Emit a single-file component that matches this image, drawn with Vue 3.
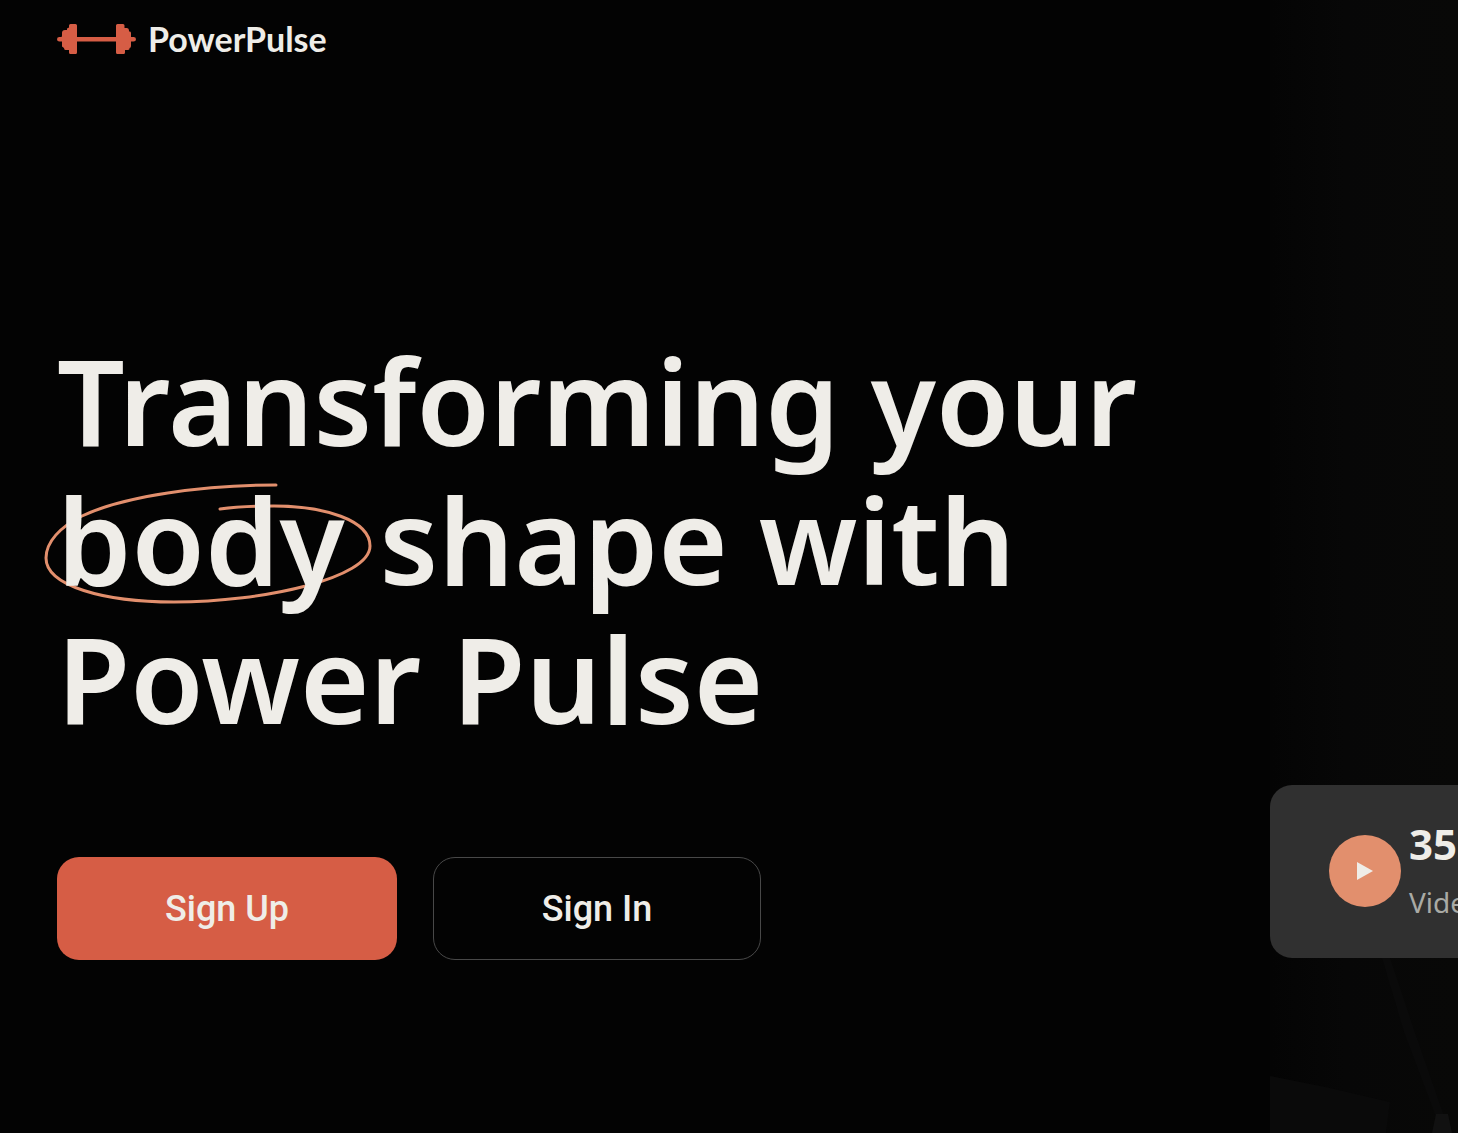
<script setup>
const headline = { first: 'Transforming your', circled: 'body', second: 'shape with', third: 'Power Pulse' }
const video = { count: '35', label: 'Vide' }
</script>

<template>
  <div class="page">
    <div class="content">
      <header class="header">
        <a class="brand" href="#">
          <svg class="dumbbell" viewBox="0 0 79 30" aria-hidden="true">
            <path d="M0 15.2Q0 13 2.4 13H4.5Q5 12.300 5 11V9Q5 6 8 6H10V4.500L12 3.500V1.500Q12 0 13.500 0H18.500Q20 0 20 1.500V13H59V1.500Q59 0 60.500 0H66Q67.500 0 67.500 1.500V4H70Q72 4 72 6.500V7.500H73Q74 7.500 74 9.500V13H76.500Q79 13 79 15.200T76.500 17.500H74V22Q74 24 72.500 24V25Q72.500 26 70.500 26H68V28.500Q68 30 66.500 30H60.500Q59 30 59 28.500V17.500H20V28.500Q20 30 18.500 30H13.500Q12 30 12 28.500V26H8.500Q7 26 7 24L5 22.500V17.500H2.400Q0 17.500 0 15.200Z" />
          </svg>
          <span>PowerPulse</span>
        </a>
      </header>

      <main class="hero">
        <h1 class="title">
          {{ headline.first }}<br />
          <span class="circled">
            <svg class="ring" viewBox="0 0 328 122" aria-hidden="true">
              <path d="M232 3C160 3 80 14 38 34C16 45 2 60 2 76C2 104 60 120 130 120C220 120 326 96 326 64C326 38 280 24 230 24C210 24 190 25 176 27" />
            </svg>
            <span class="word">{{ headline.circled }}</span>
          </span>
          {{ headline.second }}<br />
          {{ headline.third }}
        </h1>
        <div class="actions">
          <button class="button primary" type="button">Sign Up</button>
          <button class="button outline" type="button">Sign In</button>
        </div>
      </main>
    </div>

    <aside class="visual">
      <svg class="backdrop" viewBox="0 0 188 175" aria-hidden="true">
        <path d="M0 118L60 130L120 144L116 175H0Z" fill="#0a0a0a" />
        <path d="M112 0L120 0L140 60L180 175H172L134 74Z" fill="#0a0a0a" />
        <path d="M166 156L178 156L182 175H162Z" fill="#111" />
      </svg>
      <section class="card">
        <span class="play">
          <svg viewBox="0 0 16 18" aria-hidden="true"><path d="M0 0L16 9L0 18Z" /></svg>
        </span>
        <div class="stats">
          <strong class="count">{{ video.count }}</strong>
          <span class="label">{{ video.label }}</span>
        </div>
      </section>
    </aside>
  </div>
</template>

<style>
body {
  margin: 0;
  background: #030303;
}
</style>

<style scoped>
.page {
  display: grid;
  grid-template-columns: minmax(0, 1fr) 188px;
  min-height: 100vh;
  overflow: hidden;
  background: #030303;
  color: #efede8;
  font-family: "Noto Sans", sans-serif;
}

.content {
  padding: 23px 0 0 57px;
}

.header {
  display: flex;
}

.brand {
  display: flex;
  align-items: center;
  gap: 12px;
  height: 32px;
  color: inherit;
  font: 700 34px/32px Lato, sans-serif;
  text-decoration: none;
}

.dumbbell {
  width: 79px;
  height: 30px;
  fill: #d65d45;
}

.hero {
  padding-top: 276px;
}

.title {
  margin: 0;
  font-size: 119px;
  font-weight: 600;
  line-height: 139px;
  white-space: nowrap;
}

.circled {
  position: relative;
  margin-right: 4px;
}

.word {
  position: relative;
}

.ring {
  position: absolute;
  top: 24px;
  left: -13px;
  width: 328px;
  height: 122px;
  fill: none;
  stroke: #e28f6d;
  stroke-width: 3;
  stroke-linecap: round;
}

.actions {
  display: flex;
  gap: 36px;
  margin-top: 109px;
}

.button {
  box-sizing: border-box;
  height: 103px;
  border: 1px solid transparent;
  border-radius: 22px;
  color: #efede8;
  font: 500 36px/42px Roboto, sans-serif;
}

.primary {
  width: 340px;
  background: #d65d45;
}

.outline {
  width: 328px;
  border-color: #484848;
  background: transparent;
}

.visual {
  position: relative;
  display: flex;
  flex-direction: column;
  justify-content: flex-end;
  padding-bottom: 175px;
  background: linear-gradient(90deg, #040404, #070707 40%, #080807);
}

.backdrop {
  position: absolute;
  right: 0;
  bottom: 0;
  width: 188px;
  height: 175px;
}

.card {
  display: flex;
  align-items: center;
  gap: 8px;
  box-sizing: border-box;
  height: 173px;
  padding: 0 0 2px 59px;
  border-radius: 22px 0 0 22px;
  background: #303030;
  overflow: hidden;
}

.play {
  display: flex;
  flex: none;
  align-items: center;
  justify-content: center;
  width: 72px;
  height: 72px;
  border-radius: 50%;
  background: #e28f6d;
}

.play svg {
  width: 16px;
  height: 18px;
  fill: #efede8;
}

.stats {
  display: flex;
  flex-direction: column;
  gap: 14px;
}

.count {
  font-size: 42px;
  font-weight: 700;
  line-height: 48px;
}

.label {
  color: #a9aaa5;
  font-size: 28px;
  line-height: 40px;
}
</style>
